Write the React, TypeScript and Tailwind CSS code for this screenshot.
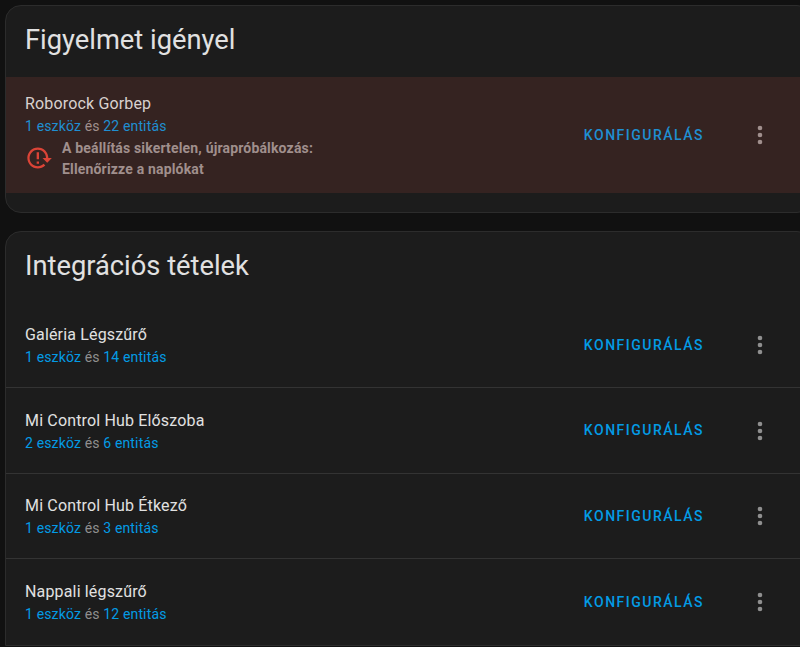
import React from "react";

const ITEMS = [
  { name: "Galéria Légszűrő", devices: "1 eszköz", entities: "14 entitás" },
  { name: "Mi Control Hub Előszoba", devices: "2 eszköz", entities: "6 entitás" },
  { name: "Mi Control Hub Étkező", devices: "1 eszköz", entities: "3 entitás" },
  { name: "Nappali légszűrő", devices: "1 eszköz", entities: "12 entitás" },
];

function DotsIcon() {
  return (
    <svg viewBox="0 0 24 24" className="h-7 w-7 fill-current">
      <path d="M12,16A2,2 0 0,1 14,18A2,2 0 0,1 12,20A2,2 0 0,1 10,18A2,2 0 0,1 12,16M12,10A2,2 0 0,1 14,12A2,2 0 0,1 12,14A2,2 0 0,1 10,12A2,2 0 0,1 12,10M12,4A2,2 0 0,1 14,6A2,2 0 0,1 12,8A2,2 0 0,1 10,6A2,2 0 0,1 12,4Z" />
    </svg>
  );
}

function Counts({ devices, entities, link, rest }: { devices: string; entities: string; link: string; rest: string }) {
  return (
    <div className={`text-[14px] leading-[20px] tracking-[0.15px] ${rest}`}>
      <span className={link}>{devices}</span> és{" "}
      <span className={link}>{entities}</span>
    </div>
  );
}

function RowActions({ dots, link }: { dots: string; link: string }) {
  return (
    <div className="flex items-center">
      <span className={`text-[14px] font-medium tracking-[1.5px] ${link}`}>KONFIGURÁLÁS</span>
      <span className={`ml-[42px] mr-[38px] ${dots}`}>
        <DotsIcon />
      </span>
    </div>
  );
}

export default function App() {
  return (
    <div className="h-[647px] w-[800px] overflow-hidden bg-[#111111] pl-[5px] pt-[5px] font-['Roboto',sans-serif]">
      <section className="h-[208px] w-[808px] rounded-[16px] border border-[#2c2c2c] bg-[#1c1c1c]">
        <h2 className="pl-[19px] pt-[14px] text-[27.3px] leading-[40px] text-[#e1e1e1]">Figyelmet igényel</h2>
        <div className="mt-[17px] flex h-[116px] items-center justify-between bg-[#352321] pl-[19px]">
          <div>
            <div className="text-[16px] leading-[24px] tracking-[0.16px] text-[#d9d1cf]">Roborock Gorbep</div>
            <Counts devices="1 eszköz" entities="22 entitás" link="text-[#1f8fd2]" rest="text-[#a08f8d]" />
            <div className="mt-[1px] flex items-center">
              <svg viewBox="0 0 24 24" className="h-7 w-7 fill-[#db4437]">
                <path d="M2 12C2 16.97 6.03 21 11 21C13.39 21 15.68 20.06 17.4 18.4L15.9 16.9C14.63 18.25 12.86 19 11 19C4.76 19 1.64 11.46 6.05 7.05C10.46 2.64 18 5.77 18 12H15L19 16H19.1L23 12H20C20 7.03 15.97 3 11 3C6.03 3 2 7.03 2 12M10 15H12V17H10V15M10 7H12V13H10V7Z" />
              </svg>
              <div className="-mb-[1px] ml-[9px] mt-[1px] text-[14px] font-bold leading-[21px] tracking-[0.17px] text-[#a08f8d]">
                A beállítás sikertelen, újrapróbálkozás:
                <br />
                Ellenőrizze a naplókat
              </div>
            </div>
          </div>
          <RowActions dots="text-[#a08f8d]" link="text-[#1f8fd2]" />
        </div>
      </section>

      <section className="mt-[18px] w-[808px] rounded-t-[16px] border border-[#2c2c2c] bg-[#1c1c1c]">
        <h2 className="pl-[19px] pt-[14px] text-[27.3px] leading-[40px] text-[#e1e1e1]">Integrációs tételek</h2>
        <div className="mt-[16.4px]">
          {ITEMS.map((item, i) => (
            <div
              key={item.name}
              className={`flex h-[85.6px] items-center justify-between pl-[19px] pt-[1px] ${
                i < ITEMS.length - 1 ? "border-b border-[#333333]" : ""
              }`}
            >
              <div>
                <div className="text-[16px] leading-[24px] tracking-[0.16px] text-[#e1e1e1]">{item.name}</div>
                <Counts devices={item.devices} entities={item.entities} link="text-[#039be5]" rest="text-[#8f8f8f]" />
              </div>
              <RowActions dots="text-[#8f8f8f]" link="text-[#039be5]" />
            </div>
          ))}
        </div>
      </section>
    </div>
  );
}
